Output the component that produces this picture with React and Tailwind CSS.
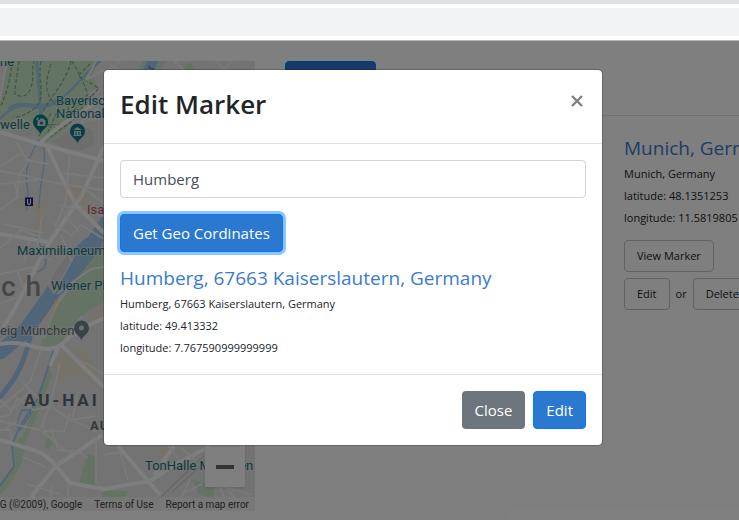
function MapPin({ x, y, color, children }) {
  return (
    <g transform={`translate(${x} ${y})`}>
      <path d="M0 9 C-1.5 4.5 -7.5 3 -7.5 -3 A7.5 7.5 0 0 1 7.5 -3 C7.5 3 1.5 4.5 0 9Z" fill={color} />
      {children}
    </g>
  );
}

function MunichMap() {
  return (
    <svg viewBox="0 61 255 450" className="block h-full w-full bg-[#e6e6e6]" role="img" aria-label="Map of Munich">
      {/* built-up areas */}
      <g fill="#ece4d3">
        <path d="M62 190 L72 180 L92 190 L86 205 L66 202Z" />
        <path d="M20 199 L46 203 L42 236 L34 234 L36 212 L18 208Z" />
        <path d="M54 364 L64 352 L82 348 L93 360 L88 378 L74 374 L60 382Z" />
        <path d="M90 366 L104 384 L104 392 L84 372Z" />
        <path d="M86 318 L104 306 V320 L92 326Z" />
        <path d="M156 446 h12 l4 8 -8 4Z" />
        <path d="M14 394 l6 -2 -1 6Z" />
      </g>
      <path d="M52 142 L78 124 L92 130 L94 145 L82 150 L66 149Z" fill="#dadada" />
      <path d="M10 132 L18 126 L32 128 L33 136 L12 136Z" fill="#dedede" />
      {/* parks */}
      <g fill="#c8e6c6">
        <path d="M9 61 H100 L92 74 L98 88 L84 94 L90 100 L84 112 L70 124 L58 135 L46 143 L38 137 L32 122 L18 117 L8 123 L0 126 V96 Z" />
        <path d="M142 61 h24 l-6 9 h-21Z" />
        <path d="M180 70 l10 -8 6 8Z" />
        <path d="M104 240 L88 262 L70 290 L55 308 L45 330 L40 350 H56 L72 330 L86 312 L104 302Z" />
        <path d="M32 313 H43 L36 326 L24 325Z" />
        <path d="M48 366 L52 376 L40 404 L38 414 L26 440 L22 462 L10 484 L0 495 V484 L14 468 L12 448 L24 434 L34 406Z" />
        <path d="M48 438 l5 3 -4 9 -5 -4Z" />
        <path d="M87 454 l10 3 v30 l-18 -4Z" />
        <path d="M102 494 l2 -3 h24 l-5 9 h-20Z" />
        <path d="M192 480 l12 2 10 5 v12 l-14 -4Z" />
      </g>
      {/* river and streams */}
      <g fill="none" stroke="#a2caf0" strokeLinecap="round">
        <path d="M112 215 L94 242 C80 250 74 262 65 274 C52 292 38 316 22 334 L0 352" strokeWidth="15" />
        <path d="M92 245 C82 260 73 268 60 286" strokeWidth="17" />
        <path d="M30 338 C24 362 18 376 0 397" strokeWidth="5" />
        <path d="M37 61 C38 85 42 105 40 125" strokeWidth="3" />
        <path d="M100 61 C82 76 76 87 64 96 C54 104 42 106 34 106 C20 104 10 108 0 119" strokeWidth="2.5" />
        <path d="M10 108 C18 103 28 105 39 107 C45 108 49 105 57 101" strokeWidth="4" />
        <path d="M39 140 C27 158 24 175 28 190 L27 210 M42 142 C49 160 39 180 39 208 M36 235 C40 250 50 255 44 268 L38 272" strokeWidth="1.3" />
        <path d="M55 346 L38 398 L18 430 L12 446 L14 466 L0 486" strokeWidth="1.8" />
        <path d="M30 410 L22 410 L17 422 L20 430 L31 414Z" strokeWidth="1.3" />
        <path d="M153 61 l-6 12" strokeWidth="10" />
      </g>
      <path d="M55 300 L51 314 L58 308 L60 300Z" fill="#f3dfac" />
      <path d="M49 286 C48 276 62 262 72 247 L76 252 C70 266 62 278 54 294Z" fill="#ddd" stroke="#f5f5f5" />
      {/* walking paths */}
      <g fill="none" stroke="#7db080" strokeWidth="1.2" strokeDasharray="4 2">
        <path d="M19 61 C17 78 14 91 15 94 Q24 100 30 90 C35 78 31 70 34 61 M12 61 C10 86 4 98 1 106 M41 61 C37 86 47 95 35 108 Q22 118 13 117" />
        <path d="M51 64 C42 90 48 98 59 107 L45 139 M71 61 C67 81 49 98 42 114 M90 64 L78 76 L99 88 L88 100 L72 121 L43 142 M58 103 L69 100 L67 125 L44 124" />
        <path d="M72 61 L81 77 L88 94 L61 126 M37 115 L51 128 M51 113 L39 136" />
      </g>
      {/* main streets */}
      <g fill="none" stroke="#fcfcfc" strokeWidth="4" strokeLinejoin="round">
        <path d="M0 132 L40 144 L104 161 M47 146 L60 174 L76 205 L104 233 M0 234 L48 242 M40 144 Q54 127 104 98" />
        <path d="M104 146 L82 195 L50 242 L38 263 L14 310 L0 332" />
        <path d="M0 344 Q18 341 35 347 Q54 352 63 343 Q75 331 104 318 M60 344 L104 387 M59 345 L50 366" />
        <path d="M0 440 L30 449 Q47 453 58 468 L70 483 L104 489 L150 481 L174 465 L205 449 M102 435 L56 466 L34 493 L28 510" />
        <path d="M118 446 L160 495 M174 446 L154 475" />
      </g>
      {/* side streets */}
      <g fill="none" stroke="#f4f4f4" strokeWidth="1.8" strokeLinejoin="round">
        <path d="M0 171 L27 176 L55 183 M0 184 L38 180 M16 142 L27 160 L48 164 M17 198 L19 175 L30 159 M0 210 L18 197 L15 184 M24 152 L0 166" />
        <path d="M6 66 L0 100 M76 127 L98 108 M70 150 L66 200 L55 228 M55 183 L104 190 M62 173 L104 178 M59 205 L104 216 M96 61 L86 80 L104 70 M88 120 L104 118" />
        <path d="M0 248 L21 230 L42 238 M0 274 L34 267 M4 224 L44 233 M0 304 L25 294 L18 272 M30 240 L24 262 M42 215 L38 246 M53 223 L70 235 M43 256 L53 261 M0 323 L12 316 M61 235 L72 262 M70 237 L81 225 L104 239" />
        <path d="M79 232 L64 213 L86 190 L104 204 M44 338 L56 306 L71 283 L91 269 L104 267 M82 316 L63 342 M57 294 L76 280" />
        <path d="M41 350 L30 382 L0 408 M66 352 L104 374 M60 363 L50 405 L40 430 L0 421 M0 400 L11 410 M15 396 L34 410 L51 406 L70 420 L96 416 M51 404 L43 421 L44 431 L64 431 L70 414" />
        <path d="M0 430 H10 L12 440 M0 417 L9 415 L18 398 M17 421 L5 429 M30 390 L15 408 M23 383 L42 402 M51 428 L58 450 L83 453 M78 391 L72 420 L97 432 M96 437 V484 M42 431 L66 451 M60 464 L74 450 L88 458 M41 482 L58 463 M22 457 L46 467 M52 484 L49 507 M68 483 V510 M26 484 L60 494" />
        <path d="M104 455 L120 452 L128 480 M168 446 L178 458 M181 447 L195 461 M174 510 L184 493 L202 484 M228 490 L245 510 M190 480 L176 507 M204 456 L225 498 M220 486 L253 495" />
        <path d="M110 64 L120 70 M120 61 L108 70 M174 61 L184 70 M216 61 l8 9 M232 61 l-8 9" />
      </g>
      <path d="M204 456 L168 490 L158 500 M207 460 L172 492" fill="none" stroke="#bfc3c9" strokeWidth="1" />

      {/* place names */}
      <g
        className="font-['Roboto',sans-serif] text-[13px]"
        fill="#10787d"
        stroke="#eeeeee"
        strokeWidth="2"
        strokeOpacity="0.6"
        paintOrder="stroke"
      >
        <text x="0" y="66">ne</text>
        <text x="0" y="129">welle</text>
        <text x="56" y="105">Bayerisc</text>
        <text x="56" y="118">National</text>
        <text x="17" y="255">Maximilianeum</text>
        <text x="51" y="290">Wiener Platz</text>
        <text x="145" y="470">TonHalle München</text>
        <text x="87" y="214" fill="#c2545c">Isartor</text>
        <text x="0" y="335" fill="#66767f">eig München</text>
      </g>
      <g fill="#8b8f93" className="font-['Roboto',sans-serif] font-medium">
        <text x="1" y="296" className="text-[28px] tracking-[10px]">ch</text>
        <text x="24" y="406" fill="#5d6973" className="text-[17px] font-bold tracking-[3px]">AU-HAI</text>
        <text x="90" y="430" fill="#65717a" className="text-[13px] font-bold tracking-[1px]">AU</text>
      </g>
      <text x="152" y="76" transform="rotate(-76 152 76)" fill="#4b76b5" className="font-['Roboto',sans-serif] text-[11px]">ar</text>

      <MapPin x="40.5" y="125" color="#0b7f88">
        <path d="M-2 -5 h1 l1 -1.5 h3 l1 1.5 h1 v6 h-8 v-4" fill="#c8dfe1" />
        <circle cx="1" cy="-2" r="1.6" fill="#0b7f88" />
        <path d="M-4.5 -6 h3 M-3 -7.5 v3" stroke="#c8dfe1" />
      </MapPin>
      <MapPin x="77.5" y="134" color="#0b7f88">
        <path d="M-4.5 -4 L0 -7 L4.5 -4Z M-4 1 h8 v1 h-8Z M-3.5 -3 h7 v4 h-7Z" fill="#c8dfe1" />
        <path d="M-1.5 -2 v3 M1.5 -2 v3" stroke="#0b7f88" />
      </MapPin>
      <MapPin x="81.5" y="331" color="#71858e">
        <circle cx="0" cy="-3" r="2.5" fill="#d8dde0" />
      </MapPin>
      <rect x="25" y="197.500" width="8" height="8.500" fill="#1b2085" />
      <path d="M27.500 199 v3.500 q0 2 1.500 2 t1.500 -2 v-3.500" fill="none" stroke="#fff" strokeWidth="1.200" />
    </svg>
  );
}

function Place({ name, latitude, longitude, address }) {
  return (
    <div className="whitespace-nowrap">
      <h5 className="text-[19px] leading-6 text-[#3a7bd0]">{name}</h5>
      <div className="mt-[3px] text-[11px] leading-[22px]">
        <p>{address}</p>
        <p>latitude: {latitude}</p>
        <p>longitude: {longitude}</p>
      </div>
    </div>
  );
}

function OutlineButton({ children }) {
  return (
    <button type="button" className="h-8 rounded border border-[#c4c4c4] px-3 text-[11px]">
      {children}
    </button>
  );
}

function BrowserBar() {
  return (
    <header className="h-[41px] shrink-0 border-t-4 border-b border-t-[#dee1e6] border-b-[#b6b6b6] bg-white py-1">
      <div className="h-7 bg-[#f1f3f4]" />
    </header>
  );
}

function EditMarkerDialog() {
  return (
    <div
      role="dialog"
      aria-modal="true"
      aria-labelledby="dialog-title"
      className="w-full max-w-[500px] rounded-[5px] border border-black/20 bg-white bg-clip-padding"
    >
      <div className="flex items-start justify-between border-b border-[#dee2e6] p-4 pb-[21px]">
        <h2 id="dialog-title" className="text-[26px] leading-9 font-semibold">
          Edit Marker
        </h2>
        <button type="button" aria-label="Close dialog" className="mt-1.5 flex size-[18px] items-center justify-center text-[#808080]">
          <svg viewBox="0 0 12 12" className="size-3" aria-hidden="true">
            <path d="M1 1 L11 11 M11 1 L1 11" stroke="currentColor" strokeWidth="2.400" />
          </svg>
        </button>
      </div>
      <div className="p-4 pb-[15px]">
        <input
          aria-label="Location"
          defaultValue="Humberg"
          className="block h-[38px] w-full rounded border border-[#ced4da] px-3 text-[15px] text-[#495057]"
        />
        <button
          type="button"
          className="mt-4 mb-3.5 block h-[38px] rounded border border-[#007bff] bg-[#2b78d0] px-3 text-[15px] text-white ring-3 ring-[#8ec5ff]"
        >
          Get Geo Cordinates
        </button>
        <Place
          name="Humberg, 67663 Kaiserslautern, Germany"
          address="Humberg, 67663 Kaiserslautern, Germany"
          latitude="49.413332"
          longitude="7.767590999999999"
        />
      </div>
      <div className="flex justify-end gap-2 border-t border-[#dee2e6] p-4">
        <button type="button" className="h-[38px] rounded bg-[#6c757d] px-[13px] text-[15px] text-white">
          Close
        </button>
        <button type="button" className="h-[38px] rounded border border-[#007bff] bg-[#2b78d0] px-3 text-[15px] text-white">
          Edit
        </button>
      </div>
    </div>
  );
}

export default function App() {
  return (
    <div className="flex h-screen flex-col overflow-hidden bg-white font-['Segoe_UI','Open_Sans',sans-serif] text-[#212529]">
      <BrowserBar />
      <div className="relative min-h-0 flex-1 overflow-hidden">
        <main className="flex pt-5">
          <section className="relative h-[450px] w-[255px] shrink-0 overflow-hidden">
            <MunichMap />
            <div className="absolute right-2.5 bottom-6 flex w-10 flex-col bg-white shadow">
              <button type="button" aria-label="Zoom in" className="flex h-10 items-center justify-center text-2xl text-[#666]">
                +
              </button>
              <span className="mx-[5px] h-px bg-[#e6e6e6]" />
              <button type="button" aria-label="Zoom out" className="flex h-10 items-center justify-center">
                <span className="h-1 w-[18px] bg-[#666]" />
              </button>
            </div>
            <div className="absolute right-0 bottom-0 flex h-3.5 w-full items-center justify-end gap-3 bg-[#f5f5f5]/70 pr-1.5 font-['Roboto',sans-serif] text-[10px] whitespace-nowrap text-[#444]">
              <span>KG (©2009), Google</span>
              <a href="#terms">Terms of Use</a>
              <a href="#report">Report a map error</a>
            </div>
          </section>
          <section className="ml-[30px] min-w-0 flex-1">
            <button type="button" className="block h-[38px] w-[91px] rounded border border-[#007bff] bg-[#2b78d0] text-[15px] text-white">
              Add New
            </button>
            <hr className="mt-4 border-[#e2e2e2]" />
            <article className="mt-5 ml-[339px]">
              <Place name="Munich, Germany" address="Munich, Germany" latitude="48.1351253" longitude="11.5819805" />
              <div className="mt-[11px]">
                <OutlineButton>View Marker</OutlineButton>
              </div>
              <div className="mt-1.5 flex items-center gap-1.5 text-[11px]">
                <OutlineButton>Edit</OutlineButton>
                <span>or</span>
                <OutlineButton>Delete</OutlineButton>
              </div>
            </article>
          </section>
        </main>
        <div className="absolute inset-0 flex items-start justify-center bg-black/50 pt-7 pr-[33px]">
          <EditMarkerDialog />
        </div>
      </div>
    </div>
  );
}
